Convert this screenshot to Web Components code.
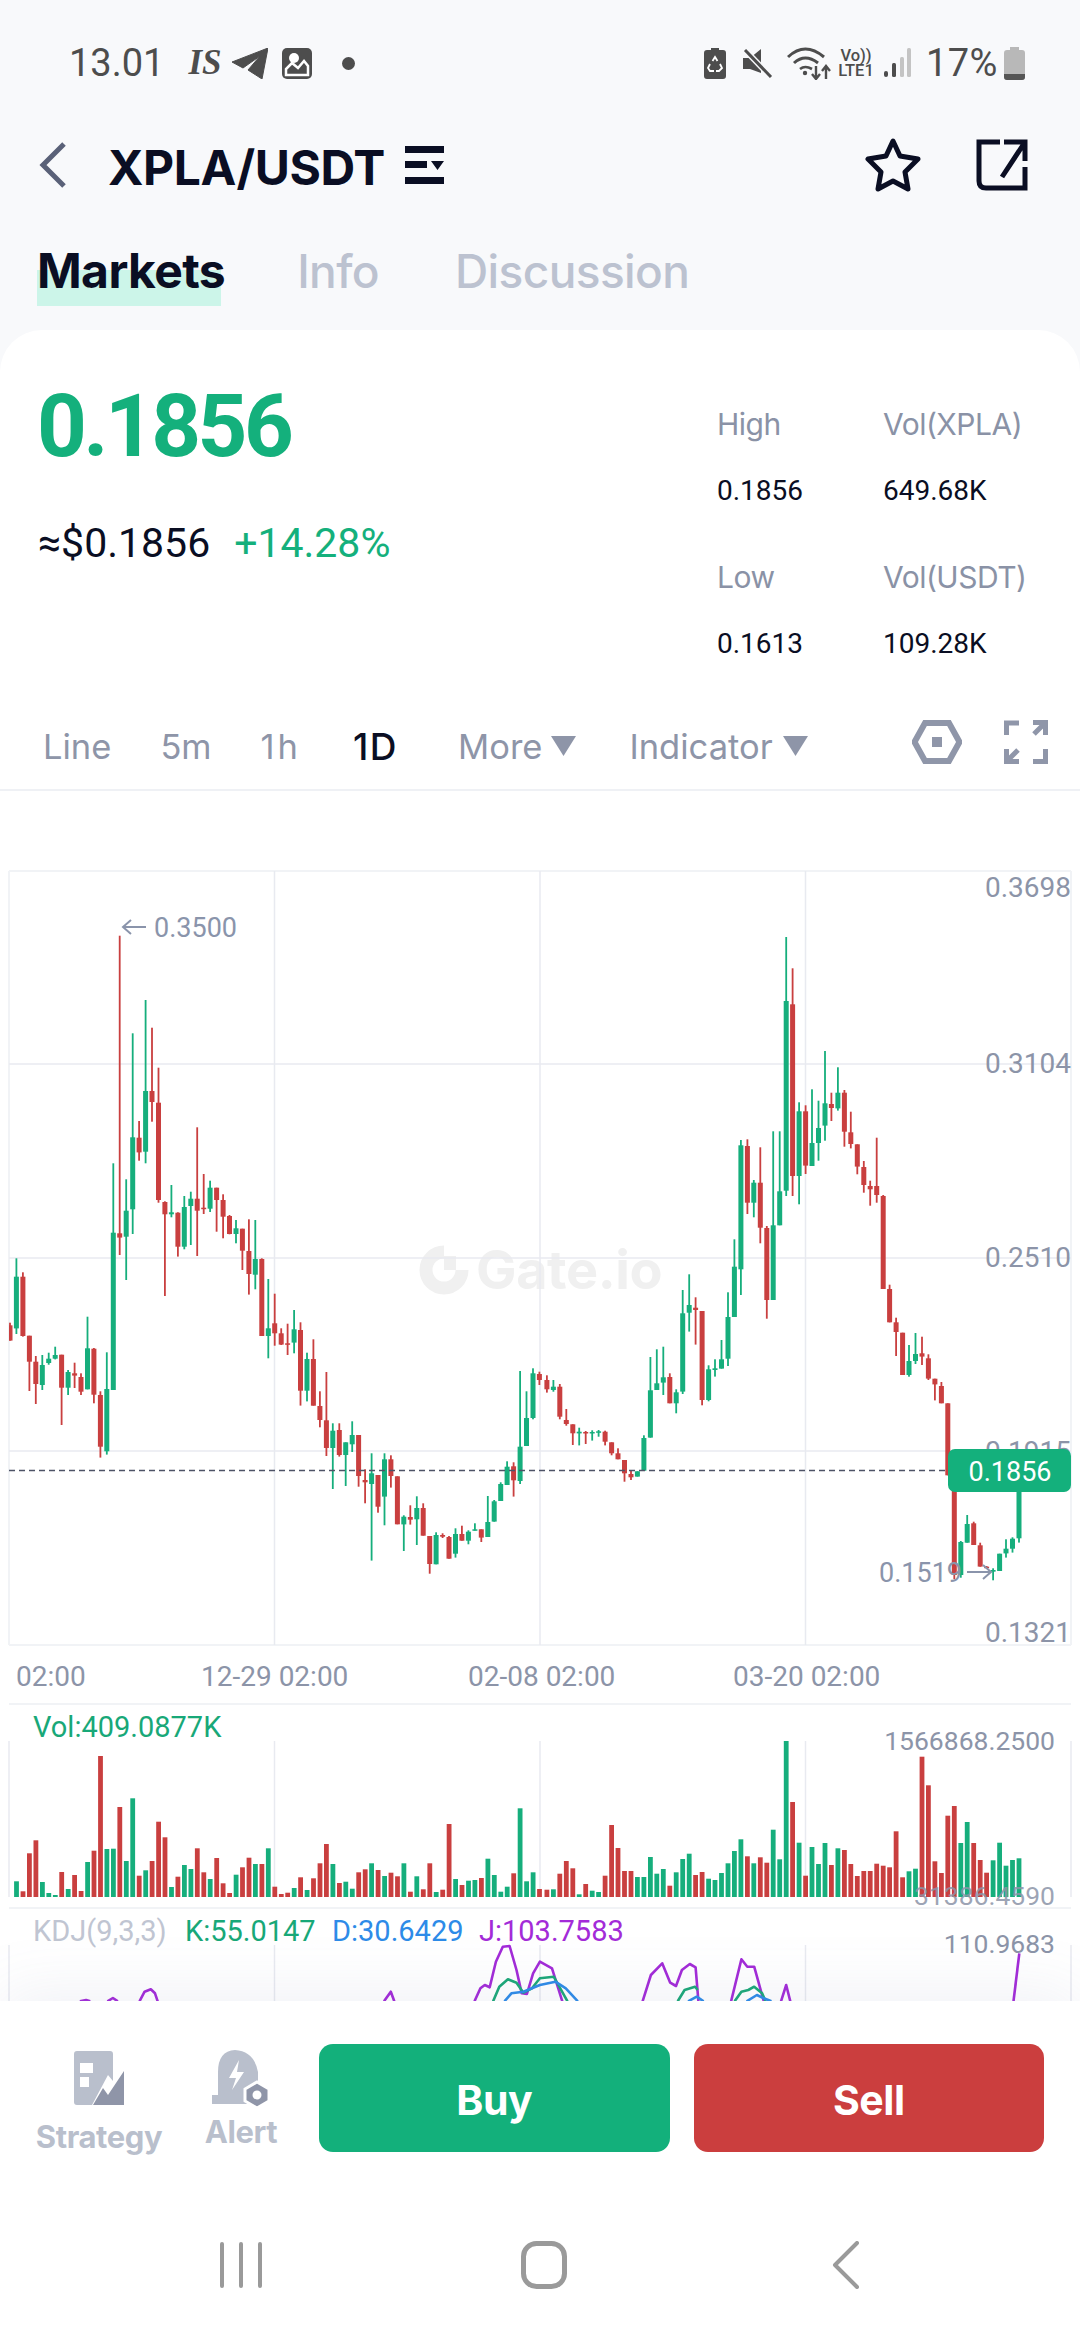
<!DOCTYPE html>
<html>
<head>
<meta charset="utf-8">
<title>XPLA/USDT</title>
<style>
  html, body { margin: 0; padding: 0; }
  body {
    width: 1080px;
    height: 2340px;
    overflow: hidden;
    background: #f8f9fb;
    font-family: Inter, "Liberation Sans", sans-serif;
  }
</style>
</head>
<body>
<market-page>
  <status-bar></status-bar>
  <pair-header>XPLA/USDT</pair-header>
  <market-tabs>
    <tab-item active>Markets</tab-item>
    <tab-item style="margin-left:72px">Info</tab-item>
    <tab-item style="margin-left:76px">Discussion</tab-item>
  </market-tabs>
  <market-card>
    <ticker-summary>
      <stat-cell><span slot="label">High</span>0.1856</stat-cell>
      <stat-cell><span slot="label">Vol(XPLA)</span>649.68K</stat-cell>
      <stat-cell><span slot="label">Low</span>0.1613</stat-cell>
      <stat-cell><span slot="label">Vol(USDT)</span>109.28K</stat-cell>
    </ticker-summary>
    <chart-toolbar></chart-toolbar>
    <kline-chart></kline-chart>
  </market-card>
  <trade-bar>
    <trade-button>Buy</trade-button>
    <trade-button kind="sell">Sell</trade-button>
  </trade-bar>
  <nav-bar></nav-bar>
</market-page>

<script>
(function() {
  // small base: shadow root from a css + markup pair
  class Base extends HTMLElement {
    constructor() {
      super();
      this.attachShadow({ mode: "open" });
      this.shadowRoot.innerHTML = `<style>${this.constructor.css}</style>${this.constructor.html}`;
    }
  }

  class MarketPage extends Base {
    static css = `:host { display: flex; flex-direction: column; width: 1080px; height: 2340px; }`;
    static html = `<slot></slot>`;
  }

  class StatusBar extends Base {
    static css = `
      :host { display: flex; align-items: center; height: 126px; padding-left: 69px; box-sizing: border-box;
        color: #4d4d4d; font-family: Roboto, sans-serif; font-size: 38px; }
      svg { display: block; flex: none; }
      .is { font: italic bold 35px "Liberation Serif", serif; margin-left: 24px; width: 32px; }
      .net { display: flex; flex-direction: column; font-family: Roboto, sans-serif; font-weight: 500; font-size: 16.5px; line-height: 15px; width: 38px; margin-left: 5px; text-align: center; }
      .right { margin-left: auto; display: flex; align-items: center; }
    `;
    static html = `
      <span>13.01</span>
      <span class="is">IS</span>
      <svg style="margin-left:12px" width="36" height="31" viewBox="0 0 36 31"><path d="M0 14 L36 0 L30 31 L16 22 L28 8 L11 20 Z" fill="#4d4d4d" stroke="#4d4d4d" stroke-width="1" stroke-linejoin="round"/></svg>
      <svg style="margin-left:14px" width="30" height="31" viewBox="0 0 30 31"><rect width="30" height="31" rx="5" fill="#4d4d4d"/><circle cx="12" cy="10" r="5" fill="#fff"/><path d="M4 27 V21 L10 15 L16 20 L22 13 L26 18 V27 Z" fill="none" stroke="#fff" stroke-width="2.5"/></svg>
      <svg style="margin-left:30px" width="13" height="13"><circle cx="6.5" cy="6.5" r="6.5" fill="#4d4d4d"/></svg>
      <div class="right" style="padding-right:55px">
        <svg width="22" height="31" viewBox="0 0 22 31"><path d="M7 0 H15 V2 H19 Q22 2 22 5 V28 Q22 31 19 31 H3 Q0 31 0 28 V5 Q0 2 3 2 H7 Z" fill="#4d4d4d"/><path d="M8.5 13 L11 9 L13.5 13 M16 16 L18 20 L15 23 H12 M10 23 H6 L4 20 L6 16" fill="none" stroke="#fff" stroke-width="1.8"/></svg>
        <svg style="margin-left:17px" width="30" height="29" viewBox="0 0 30 29"><path d="M0 9 H7 L18 0 V24 L7 20 H0 Z" fill="#4d4d4d"/><path d="M2 1 L28 28" stroke="#f8f9fb" stroke-width="6"/><path d="M2 1 L28 28" stroke="#4d4d4d" stroke-width="3"/></svg>
        <svg style="margin-left:14px" width="45" height="34" viewBox="0 0 45 34" fill="none" stroke="#4d4d4d"><path d="M1 11 Q18 -5 37 11" stroke-width="3"/><path d="M7 17 Q18 7 31 17" stroke-width="3"/><path d="M13 23 Q18 19 25 23" stroke-width="2.6"/><circle cx="18" cy="27" r="2.2" fill="#4d4d4d" stroke="none"/><path d="M29 20 V33 M25 28 L29 33 L33 28 M39 33 V20 M35 25 L39 20 L43 25" stroke-width="2.4"/></svg>
        <div class="net"><span>Vo))</span><span>LTE1</span></div>
        <svg style="margin-left:8px" width="28" height="30" viewBox="0 0 28 30"><rect x="1" y="23" width="4" height="6" rx="2" fill="#4d4d4d"/><rect x="9" y="15" width="4" height="14" rx="1.5" fill="#4d4d4d"/><rect x="17" y="9" width="4" height="20" rx="1.5" fill="#c4c4c4"/><rect x="24" y="0" width="4" height="29" rx="1.5" fill="#c4c4c4"/></svg>
        <span style="margin-left:15px;width:70px;letter-spacing:.4px">17%</span>
        <svg style="margin-left:8px" width="21" height="33" viewBox="0 0 21 33"><path d="M6 0 H15 V3 H18 Q21 3 21 6 V30 Q21 33 18 33 H3 Q0 33 0 30 V6 Q0 3 3 3 H6 Z" fill="#b8b8b8"/><path d="M0 27 H21 V30 Q21 33 18 33 H3 Q0 33 0 30 Z" fill="#555"/></svg>
      </div>
    `;
  }

  class PairHeader extends Base {
    static css = `
      :host { display: flex; align-items: center; height: 78px; padding: 0 52px 0 39px;
        color: #0a0e23; font-size: 48px; font-weight: 700; letter-spacing: -.4px; }
      svg { display: block; flex: none; }
      .name { padding-top: 4px; }
    `;
    static html = `
      <svg width="28" height="46" viewBox="0 0 28 46" style="margin-right:41px"><path d="M25 2 L4 23 L25 44" fill="none" stroke="#5a6178" stroke-width="5"/></svg>
      <span class="name"><slot></slot></span>
      <svg width="39" height="38" viewBox="0 0 39 38" style="margin-left:20px"><path d="M0 0 H39 V7 H0 Z M0 31 H39 V38 H0 Z M0 15 H22 V22 H0 Z M26 15 H39 L32.500 24 Z" fill="#0a0e23"/></svg>
      <svg width="56" height="54" viewBox="0 0 56 54" style="margin-left:auto"><path d="M28 3 L35 18 L53 21 L40 34 L43 51 L28 43 L13 51 L16 34 L3 21 L21 18 Z" fill="none" stroke="#0a0e23" stroke-width="5" stroke-linejoin="round"/></svg>
      <svg width="52" height="52" viewBox="0 0 52 52" style="margin-left:55px"><path d="M24 3 H3 V42 Q3 49 10 49 H49 V28 M49 3 L26 38 M28 3 H49 V22" fill="none" stroke="#0a0e23" stroke-width="5"/></svg>
    `;
  }

  class MarketTabs extends Base {
    static css = `:host { display: flex; height: 126px; padding: 38px 0 0 39px; box-sizing: border-box; }`;
    static html = `<slot></slot>`;
  }

  class TabItem extends Base {
    static css = `
      :host { display: block; height: 64px; line-height: 58px; font-size: 46px; font-weight: 500; color: #bcc2d0; letter-spacing: -.6px; }
      :host([active]) { color: #0a0e23; font-weight: 700; font-size: 48px; margin-left: -2px;
        background: linear-gradient(transparent 28px, #ccf5e9 28px) no-repeat 0 0 / 184px 100%; }
    `;
    static html = `<slot></slot>`;
  }

  class MarketCard extends Base {
    static css = `:host { display: block; background: #fff; border-radius: 42px 42px 0 0; height: 1671px; overflow: hidden; }`;
    static html = `<slot></slot>`;
  }

  class TickerSummary extends Base {
    static css = `
      :host { display: flex; height: 370px; box-sizing: border-box; }
      .left { padding: 50px 0 0 38px; flex: 1; }
      .price { font: 700 87px/92px Roboto, sans-serif; color: #14b07c; letter-spacing: -3.6px; margin-left: -1px; }
      .sub { display: flex; margin-top: 45px; font: 400 41px/52px Roboto, sans-serif; color: #0a0e23; }
      .sub b { font-weight: 400; color: #14b07c; margin-left: 24px; }
      .stats { width: 363px; display: grid; grid-template-columns: 166px 197px; row-gap: 46px; padding-top: 74px; align-content: start; }
    `;
    static html = `
      <div class="left">
        <div class="price">0.1856</div>
        <div class="sub"><span>≈$0.1856</span><b>+14.28%</b></div>
      </div>
      <div class="stats"><slot></slot></div>
    `;
  }

  class StatCell extends Base {
    static css = `
      :host { display: block; font: 400 28px/41px Roboto, sans-serif; color: #0a0e23; }
      .label { display: block; font-family: Inter, sans-serif; font-size: 30px; color: #8a92a6; margin-bottom: 25px; letter-spacing: -.5px; }
    `;
    static html = `<span class="label"><slot name="label"></slot></span><slot></slot>`;
  }

  class ChartToolbar extends Base {
    static css = `
      :host { display: flex; align-items: center; height: 91px; padding-top: 3px; box-sizing: border-box;
        border-bottom: 2px solid #eff1f5; font-size: 34.5px; color: #8e95a8; }
      span { display: block; flex: none; }
      .on { color: #0a0e23; font-weight: 500; font-size: 37px; letter-spacing: 1.5px; }
      svg { display: block; flex: none; }
    `;
    static html = `
      <span style="margin-left:43px">Line</span>
      <span style="margin-left:49px">5m</span>
      <span style="margin-left:49px;letter-spacing:3px">1h</span>
      <span class="on" style="margin-left:52px">1D</span>
      <span style="margin-left:60px">More</span>
      <svg style="margin-left:9px" width="25" height="20"><path d="M0 0H25L12.500 20Z" fill="#8e95a8"/></svg>
      <span style="margin-left:53px">Indicator</span>
      <svg style="margin-left:10px" width="25" height="20"><path d="M0 0H25L12.500 20Z" fill="#8e95a8"/></svg>
      <svg style="margin-left:auto;margin-top:-8px" width="50" height="44" viewBox="0 0 50 44"><path d="M2.500 22 L13 3 H37 L47.500 22 L37 41 H13 Z" fill="none" stroke="#8f96a9" stroke-width="6"/><rect x="20" y="17" width="10" height="10" fill="#8f96a9"/></svg>
      <svg style="margin:-8px 32px 0 42px" width="44" height="44" viewBox="0 0 44 44" fill="none" stroke="#8f96a9" stroke-width="5"><path d="M2.500 15 V3 H15 M29 2.500 H41.500 V15 M41 3 L30 14 M2.500 29 V41.500 H15 M3 41 L14 30 M41.500 29 V41.500 H29"/></svg>
    `;
  }

  // chart drawn in page pixels; viewBox starts where the card's chart area starts
  const RED = "#c93f3f", GREEN = "#16ae7c";
  const LEFT_CANDLES = "r 188 196 242 242|g -5 50 205 222|r 37 50 228 230|r 227 227 305 393|r 288 305 372 432|g 285 315 375 390|g 278 296 309 314|g 260 285 296 298|r 284 284 383 495|g 330 336 383 405|r 308 340 347 384|r 340 351 395 405|g 170 265 388 388|r 264 266 404 430|r 394 405 560 593|g 277 387 574 584|g -290 -82 390 390|r -973 -80 -67 -15|g -242 -148 -70 60|g -680 -368 -152 -78|r -417 -367 -323 -298|g -780 -507 -325 -290|r -697 -507 -474 -415|r -577 -472 -180 -172|r -176 -174 -137 108|g -225 -143 -137 -128|r -143 -142 -40 -10|g -192 -159 -40 -32|g -205 -184 -162 -45|r -398 -184 -148 -12|r -258 -157 -154 -138|g -238 -217 -154 -144|r -217 -217 -180 -85|r -197 -180 -130 -65|r -135 -132 -78 -77|g -120 -95 -78 -50|r -94 -94 -28 30|r -122 -27 42 104|g -120 -3 44 88|r -5 -3 228 228|g 57 205 228 295|r 101 190 220 257|r 205 220 254 255|r 191 250 253 285|g 150 208 248 280|r 187 210 392 437|g 278 297 392 424|r 238 297 437 437|r 394 438 480 502|r 336 481 564 588|g 490 512 564 687|r 490 510 585 590|g 547 547 585 678|g 484 525 553 576|r 525 525 648 680|r 628 660 667 730|g 580 640 672 902|r 645 645 740 758|g 580 598 710 796|r 586 598 648 683|r 649 649 793 793|g 766 770 793 873|r 736 771 779 794|g 709 744 778 855|r 730 744 827 827|r 828 828 912 941|g 817 825 913 913|r 820 825 830 834|r 828 831 896 896|g 805 822 881 893|r 797 822 842 842|g 811 815 842 853|g 790 808 812 812|r 808 808 833 846|g 708 786 831 831|g 720 724 785 785|g 667 672 723 723|g 604 620 675 675|r 607 619 661 710|g 333 560 663 672|g 394 474 558 558|g 325 340 474 478|r 335 342 360 375";
  const RIGHT_CANDLES = "r 346 360 388 398|g 360 380 390 395|r 372 380 470 478|r 447 480 492 497|r 493 493 520 555|g 503 515 520 556|r 513 516 520 552|g 511 516 519 542|g 510 514 517 530|r 512 515 545 556|r 547 547 580 586|r 565 580 598 598|r 600 600 640 665|r 632 642 652 660|g 634 634 650 650|g 526 534 632 632|g 291 391 533 533|g 268 370 390 390|g 260 352 368 405|r 340 351 430 430|g 388 397 430 460|g 90 160 395 402|g 43 135 158 215|r 112 143 150 254|r 153 153 420 436|g 316 328 420 424|g 298 325 330 350|g 240 298 326 326|g 97 171 296 318|g -62 20 171 171|g -360 -344 28 105|r -362 -342 -172 -138|g -240 -232 -172 -128|r -338 -232 -97 -50|r -102 -96 120 176|g -386 -104 120 120|g -386 -206 -104 -104|g -969 -777 -208 -192|r -875 -767 -252 -192|g -473 -446 -252 -167|r -464 -446 -283 -258|g -512 -351 -282 -282|g -478 -396 -351 -298|g -627 -470 -403 -358|r -502 -468 -456 -417|g -578 -502 -455 -448|r -510 -502 -385 -340|r -445 -383 -348 -335|r -347 -347 -280 -257|r -297 -279 -225 -202|r -238 -222 -212 -163|r -367 -222 -195 -172|r -195 -192 87 87|r 74 87 187 187|r 173 187 216 288|r 218 218 345 345|g 255 303 345 350|g 219 282 303 312|r 230 280 290 315|r 283 295 356 360|r 356 356 373 421|r 366 378 430 430|r 430 430 646 646|r 640 640 945 957|g 843 846 945 953|g 765 792 848 848|r 785 790 855 855|r 848 856 920 920|r 918 920 923 923|g 925 930 935 961|g 881 881 933 933|g 838 866 880 893|g 832 836 866 878|g 640 640 835 848";
  const LEFT_VOL = "g664 r694 r580 r541 g666 g699 g705 r636 g687 r645 r693 g606 r572 r288 g567 g566 r441 g603 g415 r647 g631 r603 r485 r532 g681 r650 g615 g627 r565 r637 g657 r594 r670 r699 g644 r622 r593 g612 r612 g565 r680 r702 r698 g684 r652 g690 r655 r610 r552 g612 r669 g665 g686 r637 r628 g610 r630 g648 r638 r649 g610 r695 g649 r688 r610 g696 r689 r492 g657 r675 g662 g660 r654 g596 g645 g695 g680 r640 g445 g664 g637 r687";
  const RIGHT_VOL = "r689 g688 r641 r603 r625 g703 r672 g692 g696 r647 r495 r564 r633 r633 g651 g651 g591 g641 g627 r677 g637 g597 g581 r645 r636 g656 g660 g639 g610 g573 g538 r589 g610 r592 r608 g509 g598 g243 r426 g548 r647 g561 g612 g549 r615 g565 r570 r612 r648 r633 r633 r611 r617 r622 r514 r652 g634 g626 r290 r376 r604 r639 r467 r438 g549 g486 r549 r600 r638 g601 g548 g617 g600 g595";
  const SCALE = 2.904;

  function candleMarks(data, x0, pitch, base) {
    return data.split("|").map(function(row, i) {
      const p = row.split(" ");
      const col = p[0] === "r" ? RED : GREEN;
      const x = base + (x0 + pitch * i) / SCALE;
      const y = function(v) { return (1260 + Number(v) / 3).toFixed(1); };
      const h = Math.max(1.5, (p[3] - p[2]) / 3).toFixed(1);
      return `<rect x="${(x - .9).toFixed(1)}" y="${y(p[1])}" width="1.8" height="${((p[4] - p[1]) / 3).toFixed(1)}" fill="${col}"/>` +
        `<rect x="${(x - 2.5).toFixed(1)}" y="${y(p[2])}" width="5" height="${h}" fill="${col}"/>`;
    }).join("");
  }

  function volMarks(data, x0, pitch, base) {
    return data.split(" ").map(function(item, i) {
      const col = item[0] === "r" ? RED : GREEN;
      const top = 1660 + Number(item.slice(1)) / 3;
      const x = base + (x0 + pitch * i) / SCALE;
      return `<rect x="${(x - 2.4).toFixed(1)}" y="${top.toFixed(1)}" width="4.8" height="${(1897 - top).toFixed(1)}" fill="${col}"/>`;
    }).join("");
  }

  // points are read in crop coordinates, converted here
  function kdjLine(points, base, color) {
    const d = points.map(function(p) {
      return ((base + p[0] / SCALE).toFixed(1)) + "," + ((1660 + p[1] / 3).toFixed(1));
    }).join(" ");
    return `<polyline points="${d}" fill="none" stroke="${color}" stroke-width="2.6" stroke-linejoin="round"/>`;
  }

  const PURPLE = "#a32bd8", BLUE = "#2d8be8", KDJ_GREEN = "#1ba878";

  class KlineChart extends HTMLElement {
    constructor() {
      super();
      this.attachShadow({ mode: "open" });
      const grid = [274.5, 540, 805.5];
      const vGrid = function(y1, y2) {
        return grid.map(function(x) { return `<line x1="${x}" x2="${x}" y1="${y1}" y2="${y2}"/>`; }).join("");
      };
      const kdj = [
        kdjLine([[232,1024],[250,1020],[262,1024]], 0, PURPLE),
        kdjLine([[312,1024],[328,1014],[342,1024]], 0, PURPLE),
        kdjLine([[405,1024],[420,995],[438,988],[450,1000],[458,1024]], 0, PURPLE),
        kdjLine([[1115,1024],[1135,995],[1145,1024]], 0, PURPLE),
        kdjLine([[1378,1024],[1395,985],[1408,975],[1422,982],[1440,905],[1460,860],[1480,858],[1500,930],[1515,1000],[1530,1002],[1548,940],[1568,905],[1603,925],[1633,1024]], 0, PURPLE),
        kdjLine([[1432,1024],[1450,980],[1475,958],[1500,968],[1520,998],[1545,985],[1568,955],[1608,950],[1648,1024]], 0, KDJ_GREEN),
        kdjLine([[1465,1024],[1485,1000],[1520,995],[1568,975],[1613,965],[1643,985],[1678,1024]], 0, BLUE),
        kdjLine([[298,1024],[322,945],[355,910],[378,968],[395,978],[412,930],[435,912],[452,922],[460,1024]], 540, PURPLE),
        kdjLine([[400,1024],[420,990],[450,980],[458,990]], 540, KDJ_GREEN),
        kdjLine([[430,1024],[455,1010],[475,1024]], 540, BLUE),
        kdjLine([[555,1024],[585,898],[602,920],[622,920],[650,1024]], 540, PURPLE),
        kdjLine([[565,1024],[585,995],[605,990],[622,980],[645,1000],[655,1024]], 540, KDJ_GREEN),
        kdjLine([[600,1024],[630,1005],[650,1015],[672,1024]], 540, BLUE),
        kdjLine([[700,1024],[715,975],[727,1024]], 540, PURPLE),
        kdjLine([[1375,1024],[1392,880]], 540, PURPLE)
      ].join("");
      this.shadowRoot.innerHTML = `
        <style>
          :host { display: block; height: 1210px; overflow: hidden; }
          svg { display: block; }
          text { font-family: Roboto, sans-serif; font-size: 28px; fill: #8c94a8; }
          .grid line { stroke: #e8eaf0; stroke-width: 1.5; }
          .edge line { stroke: #f1f3f6; stroke-width: 2; }
          .mark { fill: #8a94ab; font-size: 27px; }
          .tall { font-size: 26.5px; }
          .legend { font-size: 29px; }
        </style>
        <svg width="1080" height="1210" viewBox="0 791 1080 1210">
          <defs><clipPath id="plot"><rect x="9" y="871" width="1062" height="774"/></clipPath></defs>
          <g fill="none" stroke="#f0f0f0">
            <path d="M444 1252 A18 18 0 1 0 462 1270" stroke-width="13"/>
            <path d="M444 1256 H456 V1270 H444 Z" fill="#f0f0f0" stroke="none"/>
          </g>
          <text x="476" y="1289" style="font:700 54px Inter,sans-serif;fill:#f0f0f0;letter-spacing:-.4px">Gate.io</text>

          <g class="edge">
            <line x1="9" x2="1071" y1="871" y2="871"/>
            <line x1="9" x2="1071" y1="1645" y2="1645"/>
            <line x1="9" x2="9" y1="871" y2="1645"/>
            <line x1="1071" x2="1071" y1="871" y2="1645"/>
            <line x1="9" x2="1071" y1="1704" y2="1704"/>
            <line x1="9" x2="1071" y1="1908" y2="1908"/>
          </g>
          <g class="grid">
            ${vGrid(871, 1645)}
            <line x1="9" x2="1071" y1="1064" y2="1064"/>
            <line x1="9" x2="1071" y1="1258" y2="1258"/>
            <line x1="9" x2="1071" y1="1451" y2="1451"/>
            ${vGrid(1741, 1897)}
            <line x1="9" x2="9" y1="1741" y2="1897"/>
            <line x1="1071" x2="1071" y1="1741" y2="1897"/>
            ${vGrid(1945, 2001)}
            <line x1="9" x2="9" y1="1945" y2="2001"/>
            <line x1="1071" x2="1071" y1="1945" y2="2001"/>
          </g>

          <text x="1071" y="897" text-anchor="end">0.3698</text>
          <text x="1071" y="1073" text-anchor="end">0.3104</text>
          <text x="1071" y="1267" text-anchor="end">0.2510</text>
          <text x="1071" y="1461" text-anchor="end">0.1915</text>
          <text x="1071" y="1642" text-anchor="end">0.1321</text>

          <g clip-path="url(#plot)">
            ${candleMarks(LEFT_CANDLES, 29, 18.75, 0)}
            ${candleMarks(RIGHT_CANDLES, 20, 18.78, 540)}
          </g>

          <line x1="9" x2="948" y1="1470.500" y2="1470.500" stroke="#4d5266" stroke-width="1.600" stroke-dasharray="6 4"/>

          <path d="M146 927 H123 M131 920 L123 927 L131 934" fill="none" stroke="#8a94ab" stroke-width="2"/>
          <text class="mark" x="154" y="937">0.3500</text>
          <text class="mark" x="879" y="1582">0.1519</text>
          <path d="M967 1572 H991 M983 1565 L991 1572 L983 1579" fill="none" stroke="#8a94ab" stroke-width="2"/>

          <rect x="948" y="1449" width="123" height="43" rx="7" fill="#14b07c"/>
          <text x="1010" y="1481" text-anchor="middle" style="fill:#fff;font-size:27px">0.1856</text>

          <text x="16" y="1686">02:00</text>
          <text x="201" y="1686">12-29 02:00</text>
          <text x="468" y="1686">02-08 02:00</text>
          <text x="733" y="1686">03-20 02:00</text>

          <text class="legend" x="33" y="1737" style="fill:#18a878">Vol:409.0877K</text>
          ${volMarks(LEFT_VOL, 48, 18.75, 0)}
          ${volMarks(RIGHT_VOL, 20, 18.78, 540)}
          <text class="tall" x="1055" y="1750" text-anchor="end">1566868.2500</text>
          <text class="tall" x="1055" y="1905" text-anchor="end" style="fill-opacity:.85">31386.4590</text>

          <text class="legend" x="33" y="1941" style="fill:#c0c5d2">KDJ(9,3,3)</text>
          <text class="legend" x="185" y="1941" style="fill:#18a878">K:55.0147</text>
          <text class="legend" x="332" y="1941" style="fill:${BLUE}">D:30.6429</text>
          <text class="legend" x="479" y="1941" style="fill:${PURPLE}">J:103.7583</text>
          <text class="tall" x="1055" y="1953" text-anchor="end">110.9683</text>
          ${kdj}
        </svg>
      `;
    }
  }

  class TradeBar extends Base {
    static css = `
      :host { display: flex; position: relative; height: 189px; background: #fff; box-sizing: border-box;
        padding: 43px 36px 0 36px; box-shadow: 0 -8px 60px rgba(110,120,170,.10); clip-path: inset(-100px 0 0 0); }
      .tool { flex: none; display: flex; flex-direction: column; align-items: center; font-size: 31px; font-weight: 700; color: #b9bfcc; letter-spacing: -.4px; }
      svg { display: block; }
      .btns { display: flex; gap: 24px; margin-left: 42px; flex: 1; }
    `;
    static html = `
      <div class="tool" style="width:126px;padding-top:7px">
        <svg width="50" height="54" viewBox="0 0 50 54"><path d="M0 3 Q0 0 3 0 H36 Q39 0 39 3 V30 L34 24 L18 54 H3 Q0 54 0 51 Z" fill="#b9bfcc"/><path d="M6 12 H19 V22 H6 Z M6 26 H15 V36 H6 Z" fill="#fff"/><path d="M19 54 L29 37 L34 44 L50 20 V54 Z" fill="#8f95a8"/></svg>
        <span style="margin-top:14px;line-height:36px">Strategy</span>
      </div>
      <div class="tool" style="width:72px;margin-left:43px;padding-top:6px">
        <svg width="58" height="58" viewBox="0 0 58 58"><path d="M6 22 Q6 1 23 0 Q42 1 46 22 V44 L36 42 V54 H0 V45 H6 Z" fill="#b9bfcc"/><path d="M27 10 L17 28 H24 L20 40 L32 22 H25 Z" fill="#fff"/><path d="M45 32 L57 39 V51 L45 58 L33 51 V39 Z" fill="#8f95a8" stroke="#fff" stroke-width="3"/><circle cx="45" cy="45" r="4.500" fill="#fff"/></svg>
        <span style="margin-top:6px;line-height:36px">Alert</span>
      </div>
      <div class="btns"><slot></slot></div>
    `;
  }

  class TradeButton extends Base {
    static css = `
      :host { display: flex; flex: 1; height: 108px; padding-top: 3px; box-sizing: border-box; align-items: center; justify-content: center;
        border-radius: 14px; background: #13b07b; color: #fff; font-size: 41px; font-weight: 700; letter-spacing: -.5px; }
      :host([kind="sell"]) { background: #cb3e3e; }
    `;
    static html = `<slot></slot>`;
  }

  class NavBar extends Base {
    static css = `
      :host { display: grid; grid-template-columns: repeat(3, 302.5px); height: 150px; padding-left: 90px; background: #fff; align-items: center; justify-items: center; }
      svg { display: block; }
    `;
    static html = `
      <svg width="44" height="46" viewBox="0 0 44 46"><path d="M3 2 V44 M22 2 V44 M41 2 V44" stroke="#9a9a9a" stroke-width="4" stroke-linecap="round"/></svg>
      <svg width="46" height="48" viewBox="0 0 46 48"><rect x="2.500" y="2.500" width="41" height="43" rx="13" fill="none" stroke="#9a9a9a" stroke-width="5"/></svg>
      <svg width="28" height="48" viewBox="0 0 28 48"><path d="M25 2 L3 24 L25 46" fill="none" stroke="#9a9a9a" stroke-width="4" stroke-linecap="round" stroke-linejoin="round"/></svg>
    `;
  }

  customElements.define("market-page", MarketPage);
  customElements.define("status-bar", StatusBar);
  customElements.define("pair-header", PairHeader);
  customElements.define("market-tabs", MarketTabs);
  customElements.define("tab-item", TabItem);
  customElements.define("market-card", MarketCard);
  customElements.define("ticker-summary", TickerSummary);
  customElements.define("stat-cell", StatCell);
  customElements.define("chart-toolbar", ChartToolbar);
  customElements.define("kline-chart", KlineChart);
  customElements.define("trade-bar", TradeBar);
  customElements.define("trade-button", TradeButton);
  customElements.define("nav-bar", NavBar);
})();
</script>
</body>
</html>
